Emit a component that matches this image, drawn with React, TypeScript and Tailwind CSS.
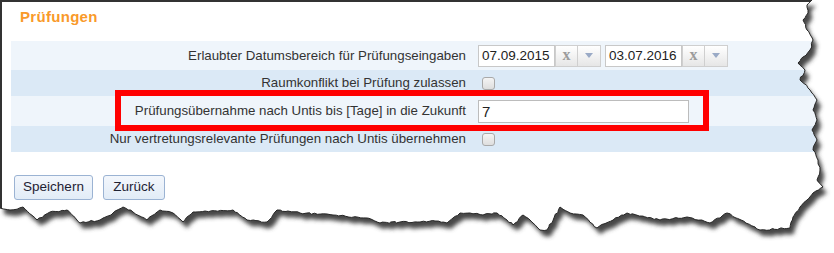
import React from "react";

// Randrisse als Punktliste (rechts oben -> rechts unten -> links unten)
const rightEdge: number[][] = [
  [812, 0], [807, 5], [808, 13], [803, 20], [807, 30], [813, 40], [810, 50],
  [803, 57], [798, 63], [805, 70], [800, 80], [810, 90], [817, 100], [813, 110],
  [817, 120], [812, 130], [817, 140], [813, 150], [818, 160], [820, 170],
  [817, 180], [823, 187], [813, 193], [807, 200], [800, 207], [793, 217], [790, 228],
];
const bottomEdge: number[][] = [
  [760, 230], [727, 213], [710, 223], [687, 217], [660, 220], [627, 213],
  [597, 228], [583, 215], [570, 213], [560, 207], [547, 230], [540, 230],
  [533, 223], [523, 215], [513, 225], [507, 220], [497, 213], [483, 215],
  [470, 213], [460, 213], [447, 223], [435, 221], [420, 222], [400, 222],
  [380, 223], [367, 218], [333, 215], [300, 213], [277, 210], [267, 222],
  [247, 220], [233, 210], [193, 212], [183, 222], [173, 213], [160, 210],
  [147, 220], [133, 212], [123, 207], [113, 213], [100, 220], [80, 223],
  [67, 210], [50, 212], [37, 220], [23, 207], [10, 210], [0, 208],
];

const buildEdge = () => {
  let seed = 7;
  const rnd = () => {
    seed = (seed * 16807) % 2147483647;
    return seed / 2147483647 - 0.5;
  };
  const pts = [...rightEdge, ...bottomEdge];
  const out: string[] = [];
  for (let i = 0; i < pts.length - 1; i++) {
    const [x1, y1] = pts[i];
    const [x2, y2] = pts[i + 1];
    const steps = Math.max(1, Math.round(Math.hypot(x2 - x1, y2 - y1) / 3));
    for (let s = 0; s < steps; s++) {
      const t = s / steps;
      const jx = s === 0 ? 0 : rnd() * 1.6;
      const jy = s === 0 ? 0 : rnd() * 1.6;
      out.push(`${(x1 + (x2 - x1) * t + jx).toFixed(1)} ${(y1 + (y2 - y1) * t + jy).toFixed(1)}`);
    }
  }
  const last = pts[pts.length - 1];
  out.push(`${last[0]} ${last[1]}`);
  return out;
};

const edgePts = buildEdge();
const edgePath = "M" + edgePts.join(" L");
const pagePath = "M0 0 L" + edgePts.join(" L") + " Z";
const outsidePath = `M0 0 H834 V253 H0 Z ${pagePath}`;

const TornEdge = () => (
  <svg className="absolute inset-0 pointer-events-none" width={834} height={253}>
    <defs>
      <clipPath id="outside">
        <path d={outsidePath} clipRule="evenodd" />
      </clipPath>
      <filter id="soft" x="-5%" y="-5%" width="110%" height="110%">
        <feGaussianBlur stdDeviation="2" />
      </filter>
    </defs>
    <path d={outsidePath} fillRule="evenodd" fill="#ffffff" />
    <g clipPath="url(#outside)">
      <path d={pagePath} transform="translate(4,6)" fill="#474747" filter="url(#soft)" />
    </g>
    <path d={edgePath} fill="none" stroke="#262626" strokeWidth={1} />
  </svg>
);

const ClearBtn = () => (
  <div
    className="w-[23px] h-[22px] flex items-center justify-center border border-[#cfcfcf] bg-gradient-to-b from-white to-[#e6e6e6] text-[#9c9c9c] font-bold text-[16px] leading-none pb-[2px]"
    style={{ fontFamily: '"Liberation Serif", serif' }}
  >
    x
  </div>
);

const DropBtn = () => (
  <div className="w-[23px] h-[22px] flex items-center justify-center border border-[#cfcfcf] border-l-0 bg-gradient-to-b from-white to-[#e6e6e6]">
    <svg width="8" height="5" viewBox="0 0 8 5">
      <path d="M0 0 H8 L4 5 Z" fill="#9aaac6" />
    </svg>
  </div>
);

const DateField = ({ value }: { value: string }) => (
  <div className="flex">
    <div className="w-[77px] h-[22px] border border-[#c8c8c8] bg-white pl-[3px] text-[13.5px] leading-[20px] text-[#222]">
      {value}
    </div>
    <ClearBtn />
    <DropBtn />
  </div>
);

const Checkbox = () => (
  <div className="ml-[4px] w-[13px] h-[13px] rounded-[3px] border border-[#a9a9a9] bg-gradient-to-b from-[#f4f4f4] to-[#dedede]" />
);

const Row = ({ label, dark, h, children }: any) => (
  <div className={`flex items-center ${h} ${dark ? "bg-[#dbe9f6]" : "bg-[#eff5fb]"}`}>
    <div className="w-[461px] text-right pr-[6px] text-[13.3px] text-[#333] whitespace-nowrap">{label}</div>
    <div className="flex items-center gap-[4px] pl-[6px]">{children}</div>
  </div>
);

export default function App() {
  return (
    <div
      className="relative w-[834px] h-[253px] overflow-hidden bg-white"
      style={{ fontFamily: '"Liberation Sans", Arial, sans-serif' }}
    >
      <div className="h-full border-t-2 border-l-2 border-[#333]">
        <div className="pl-[18px] pt-[6px] text-[15px] leading-[18px] font-bold tracking-[0.3px] text-[#f99a2a]">
          Prüfungen
        </div>
        <div className="ml-[9px] mt-[15px] w-[820px]">
          <Row label="Erlaubter Datumsbereich für Prüfungseingaben" h="h-[29px]">
            <DateField value="07.09.2015" />
            <DateField value="03.07.2016" />
          </Row>
          <Row label="Raumkonflikt bei Prüfung zulassen" dark h="h-[26px]">
            <Checkbox />
          </Row>
          <Row label="Prüfungsübernahme nach Untis bis [Tage] in die Zukunft" h="h-[30px]">
            <div className="w-[211px] h-[23px] border border-[#bcbcbc] bg-white pl-[3px] text-[15px] leading-[21px] text-[#222]">
              7
            </div>
          </Row>
          <Row label="Nur vertretungsrelevante Prüfungen nach Untis übernehmen" dark h="h-[26px]">
            <Checkbox />
          </Row>
        </div>
        <div className="flex gap-[10px] ml-[12px] mt-[23px]">
          <button className="w-[79px] h-[25px] rounded-[3px] border border-[#9bb3d3] bg-gradient-to-b from-[#f3f7fc] to-[#e2ecf7] text-[13.5px] text-[#1f2233]">
            Speichern
          </button>
          <button className="w-[62px] h-[25px] rounded-[3px] border border-[#9bb3d3] bg-gradient-to-b from-[#f3f7fc] to-[#e2ecf7] text-[13.5px] text-[#1f2233]">
            Zurück
          </button>
        </div>
      </div>
      <div className="absolute left-[115px] top-[90px] w-[594px] h-[41px] border-[6px] border-[#ff0000]" />
      <TornEdge />
    </div>
  );
}
